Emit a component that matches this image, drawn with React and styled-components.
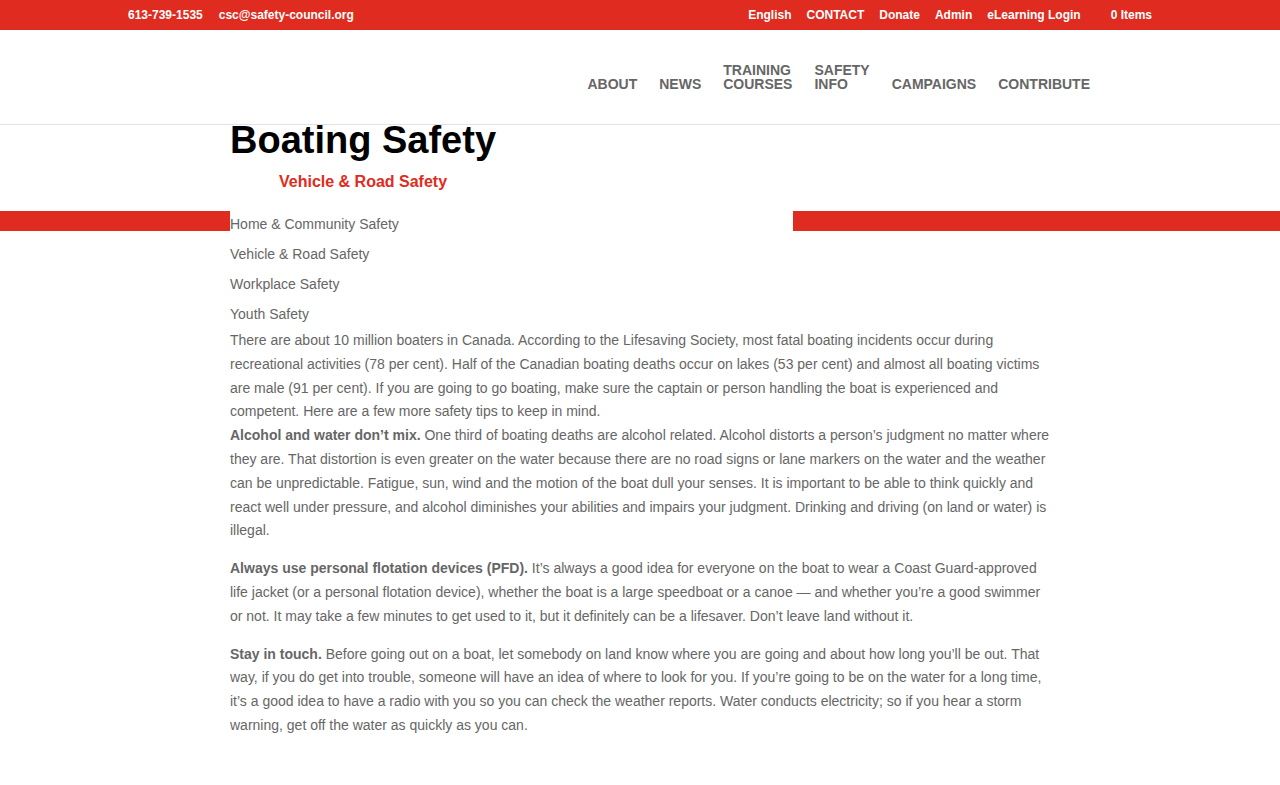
import React from "react";
import styled, { createGlobalStyle } from "styled-components";

const topLinks = ["English", "CONTACT", "Donate", "Admin", "eLearning Login"];

const navItems = [
  "ABOUT",
  "NEWS",
  "TRAINING\nCOURSES",
  "SAFETY\nINFO",
  "CAMPAIGNS",
  "CONTRIBUTE",
];

const subMenu = [
  "Home & Community Safety",
  "Vehicle & Road Safety",
  "Workplace Safety",
  "Youth Safety",
];

const App = () => {
  return (
    <Page>
      <GlobalStyle />
      <TopBar>
        <TopInner>
          <TopGroup>
            <TopLink>613-739-1535</TopLink>
            <TopLink>csc@safety-council.org</TopLink>
          </TopGroup>
          <TopGroup>
            {topLinks.map((item) => (
              <TopLink key={item}>{item}</TopLink>
            ))}
            <CartLink>0 Items</CartLink>
          </TopGroup>
        </TopInner>
      </TopBar>

      <Header>
        <HeaderInner>
          <Nav>
            {navItems.map((item) => (
              <NavItem key={item}>{item}</NavItem>
            ))}
          </Nav>
        </HeaderInner>
      </Header>

      <Column>
        <TitleBlock>
          <Title>Boating Safety</Title>
          <Subtitle>Vehicle &amp; Road Safety</Subtitle>
        </TitleBlock>
      </Column>

      <Band>
        <Column>
          <SubMenu>
            {subMenu.map((item) => (
              <SubMenuItem key={item}>{item}</SubMenuItem>
            ))}
          </SubMenu>

          <Paragraph $tight>
            There are about 10 million boaters in Canada. According to the
            Lifesaving Society, most fatal boating incidents occur during
            recreational activities (78 per cent). Half of the Canadian boating
            deaths occur on lakes (53 per cent) and almost all boating victims
            are male (91 per cent). If you are going to go boating, make sure
            the captain or person handling the boat is experienced and
            competent. Here are a few more safety tips to keep in mind.
          </Paragraph>
          <Paragraph>
            <strong>Alcohol and water don’t mix.</strong> One third of boating
            deaths are alcohol related. Alcohol distorts a person’s judgment no
            matter where they are. That distortion is even greater on the water
            because there are no road signs or lane markers on the water and
            the weather can be unpredictable. Fatigue, sun, wind and the motion
            of the boat dull your senses. It is important to be able to think
            quickly and react well under pressure, and alcohol diminishes your
            abilities and impairs your judgment. Drinking and driving (on land
            or water) is illegal.
          </Paragraph>
          <Paragraph>
            <strong>Always use personal flotation devices (PFD).</strong> It’s
            always a good idea for everyone on the boat to wear a Coast
            Guard-approved life jacket (or a personal flotation device), whether
            the boat is a large speedboat or a canoe — and whether you’re a good
            swimmer or not. It may take a few minutes to get used to it, but it
            definitely can be a lifesaver. Don’t leave land without it.
          </Paragraph>
          <Paragraph>
            <strong>Stay in touch.</strong> Before going out on a boat, let
            somebody on land know where you are going and about how long you’ll
            be out. That way, if you do get into trouble, someone will have an
            idea of where to look for you. If you’re going to be on the water
            for a long time, it’s a good idea to have a radio with you so you
            can check the weather reports. Water conducts electricity; so if you
            hear a storm warning, get off the water as quickly as you can.
          </Paragraph>
        </Column>
      </Band>
    </Page>
  );
};

const GlobalStyle = createGlobalStyle`
  * {
    box-sizing: border-box;
  }
  body {
    margin: 0;
    background: #fff;
    font-family: "Liberation Sans", Arial, sans-serif;
    font-size: 14px;
    color: #666;
  }
`;

const Page = styled.div`
  min-height: 785px;
  background: #fff;
`;

const TopBar = styled.div`
  background-color: #e02b20;
  height: 30px;
`;

const TopInner = styled.div`
  width: 1024px;
  height: 100%;
  margin: 0 auto;
  display: flex;
  justify-content: space-between;
  align-items: center;
`;

const TopGroup = styled.div`
  display: flex;
  align-items: center;
  gap: 15px;

  &:first-child {
    gap: 16px;
  }
`;

const TopLink = styled.a`
  color: #fff;
  font-size: 12px;
  font-weight: 700;
  line-height: 30px;
  text-decoration: none;
`;

const CartLink = styled(TopLink)`
  margin-left: 15px;
`;

const Header = styled.header`
  border-bottom: 1px solid #e2e2e2;
`;

const HeaderInner = styled.div`
  width: 1024px;
  margin: 0 auto;
  display: flex;
  justify-content: flex-end;
  padding: 33px 62px 33px 0;
`;

const Nav = styled.nav`
  display: flex;
  align-items: flex-end;
  gap: 22px;
  height: 28px;
`;

const NavItem = styled.a`
  color: #666;
  font-size: 14px;
  font-weight: 700;
  line-height: 14px;
  white-space: pre-line;
  text-decoration: none;
`;

const Column = styled.div`
  width: 820px;
  margin: 0 auto;
`;

const TitleBlock = styled.div`
  width: fit-content;
  display: flex;
  flex-direction: column;
  align-items: center;
`;

const Title = styled.h1`
  margin: -4px 0 0;
  font-size: 38px;
  line-height: 38px;
  font-weight: 700;
  color: #000;
`;

const Subtitle = styled.h3`
  margin: 9px 0 0;
  font-size: 16px;
  line-height: 27px;
  font-weight: 700;
  color: #e02b20;
`;

const Band = styled.section`
  margin-top: 16px;
  background: linear-gradient(#e02b20, #e02b20) top left / 100% 20px no-repeat;
`;

const SubMenu = styled.ul`
  width: 563px;
  margin: 0;
  padding: 0 0 2px;
  list-style: none;
  background: #fff;
`;

const SubMenuItem = styled.li`
  line-height: 26px;
  color: #666;

  & + & {
    margin-top: 4px;
  }
`;

const Paragraph = styled.p`
  margin: 0;
  padding-bottom: ${(p) => (p.$tight ? "0" : "14px")};
  line-height: 1.7;
  color: #666;

  strong {
    font-weight: 700;
  }
`;

export default App;
